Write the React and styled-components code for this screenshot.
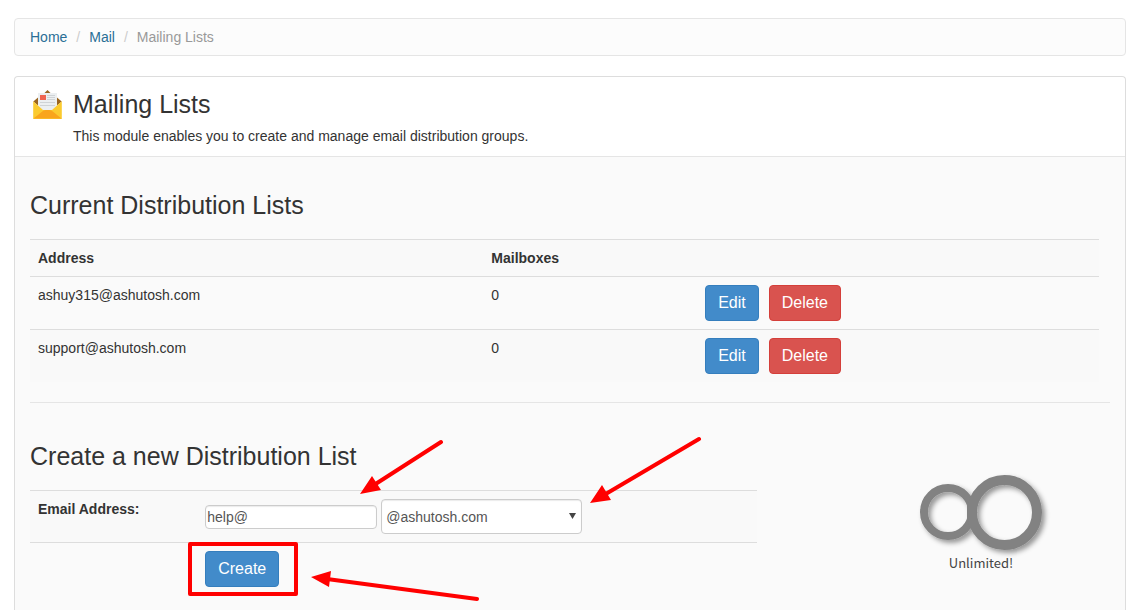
import React from 'react';
import styled, { createGlobalStyle } from 'styled-components';

const GlobalStyle = createGlobalStyle`
  *, *::before, *::after {
    box-sizing: border-box;
  }
  body {
    margin: 0;
    background: #fff;
    color: #333;
    font-family: 'Liberation Sans', Arial, sans-serif;
    font-size: 14px;
    line-height: 20px;
  }
`;

const Page = styled.div`
  display: flex;
  flex-direction: column;
  gap: 20px;
  min-height: 100vh;
  padding: 18px 8px 0 14px;
`;

const Breadcrumb = styled.ol`
  display: flex;
  margin: 0;
  padding: 8px 15px;
  list-style: none;
  background: #fcfcfc;
  border: 1px solid #e5e5e5;
  border-radius: 4px;
`;

const Crumb = styled.li`
  color: #999;
  & + &::before {
    content: '/';
    padding: 0 9px;
    color: #ccc;
  }
`;

const CrumbLink = styled.a`
  color: #2a6f96;
  text-decoration: none;
`;

const Panel = styled.main`
  flex: 1;
  background: #fafafa;
  border: 1px solid #ddd;
  border-bottom: 0;
  border-radius: 4px 4px 0 0;
`;

const PanelHeader = styled.header`
  display: flex;
  gap: 8px;
  padding: 10px 15px;
  background: #fff;
  border-bottom: 1px solid #e5e5e5;
  border-radius: 4px 4px 0 0;
`;

const Title = styled.h1`
  margin: 0 0 5px;
  font-size: 25px;
  font-weight: 400;
  line-height: 34px;
`;

const Desc = styled.p`
  margin: 0;
`;

const PanelBody = styled.div`
  padding: 15px 15px 0;
`;

const Section = styled.section`
  position: relative;
  padding-top: ${({ $top }) => $top}px;
`;

const SectionTitle = styled.h2`
  margin: 0 0 20px;
  font-size: 25px;
  font-weight: 400;
  line-height: 27px;
`;

const Divider = styled.hr`
  height: 1px;
  margin: 20px 0 0;
  border: 0;
  background: #e5e5e5;
`;

const Table = styled.table`
  width: ${({ $width }) => $width || '100%'};
  table-layout: fixed;
  border-collapse: separate;
  border-spacing: 0;
  th,
  td {
    padding: 8px;
    border-top: 1px solid #ddd;
    text-align: left;
    vertical-align: top;
  }
  tr:nth-child(odd) > * {
    background: #f9f9f9;
  }
`;

const Col = styled.col`
  width: ${({ $width }) => $width};
`;

const Actions = styled.div`
  display: flex;
  gap: 10px;
`;

const Button = styled.button`
  display: block;
  padding: 6px 12px;
  font-family: inherit;
  font-size: 16px;
  line-height: 22px;
  color: #fff;
  background: ${({ $danger }) => ($danger ? '#d9534f' : '#428bca')};
  border: 1px solid ${({ $danger }) => ($danger ? '#d43f3a' : '#357ebd')};
  border-radius: 4px;
  cursor: pointer;
`;

const CreateGrid = styled.div`
  display: grid;
  grid-template-columns: minmax(0, 1fr) 258px;
  gap: 95px;
`;

const Fields = styled.div`
  display: flex;
  align-items: center;
  gap: 4px;
`;

const TextInput = styled.input`
  width: 172px;
  height: 24px;
  padding: 1px;
  font-family: inherit;
  font-size: 14px;
  color: #555;
  background: #fff;
  border: 1px solid #ccc;
  border-radius: 4px;
  box-shadow: inset 0 1px 1px rgba(0, 0, 0, 0.08);
`;

const SelectWrap = styled.div`
  position: relative;
`;

const Select = styled.select`
  display: block;
  width: 201px;
  height: 35px;
  padding: 0 4px;
  appearance: none;
  font-family: inherit;
  font-size: 14px;
  color: #555;
  background: #fff;
  border: 1px solid #ccc;
  border-radius: 4px;
  box-shadow: inset 0 1px 1px rgba(0, 0, 0, 0.08);
`;

const Caret = styled.svg`
  position: absolute;
  top: 14px;
  right: 6px;
  pointer-events: none;
`;

const Quota = styled.figure`
  display: flex;
  flex-direction: column;
  align-items: center;
  margin: 32px 0 0;
  svg {
    overflow: visible;
  }
`;

const QuotaLabel = styled.figcaption`
  margin-top: 3px;
  font-family: 'Noto Sans CJK SC', 'Noto Sans', sans-serif;
  font-size: 13px;
  line-height: 20px;
  color: #444;
`;

const Annotations = styled.svg`
  position: absolute;
  top: 0;
  left: 0;
  pointer-events: none;
`;

const lists = [
  { address: 'ashuy315@ashutosh.com', mailboxes: 0 },
  { address: 'support@ashutosh.com', mailboxes: 0 },
];

const MailIcon = () => (
  <svg width="35" height="35" viewBox="0 0 35 35" aria-hidden="true">
    <path d="M14.5 6 17.5 3l3 3z" fill="#9b6520" />
    <path d="M3.3 14.5 8 10.5v8zM31.7 14.5 27 10.5v8z" fill="#9b6520" />
    <path d="M8 6h19v17.5H8z" fill="#eceff1" />
    <path d="M10 8h6v5h-6z" fill="#ef6451" />
    <path d="M17 8.5h8M17 10.5h8M17 12.5h8M10 15.5h15M10 18.5h15" stroke="#cfd3d6" />
    <path d="M3.2 14.2 13 23h9l9.8-8.8V32H3.2z" fill="#fbcb2f" />
    <path d="M3.5 31.5 13.5 23.5 16 23h3l2.5.5 10 8z" fill="#f9a51c" />
  </svg>
);

const UnlimitedIcon = () => (
  <svg width="122" height="75" viewBox="0 0 122 75" fill="none" aria-hidden="true">
    <defs>
      <filter id="ringShadow" x="-20%" y="-20%" width="150%" height="150%">
        <feDropShadow dx="3" dy="3" stdDeviation="2.5" floodColor="#000" floodOpacity="0.4" />
      </filter>
    </defs>
    <g filter="url(#ringShadow)" stroke="#828282">
      <circle cx="28" cy="37" r="24" strokeWidth="8" />
      <circle cx="84.5" cy="37.5" r="32.5" strokeWidth="10" />
      <path d="M49 28v18" strokeWidth="4" />
    </g>
  </svg>
);

const Pointers = () => (
  <Annotations width="1080" height="207" viewBox="30 403 1080 207" aria-hidden="true">
    <g stroke="#f00" strokeWidth="4" strokeLinecap="round" fill="none">
      <path d="M441 442 374 485M699 439 604 495M477 599 327 579" />
      <rect x="190" y="544" width="106" height="50" strokeLinejoin="round" />
    </g>
    <path d="M360 494 372 476 381 490zM590 503 602 485 611 500zM311 577 331 571 329 587z" fill="#f00" />
  </Annotations>
);

const App = () => {
  return (
    <>
      <GlobalStyle />
      <Page>
        <nav aria-label="Breadcrumb">
          <Breadcrumb>
            <Crumb>
              <CrumbLink href="#home">Home</CrumbLink>
            </Crumb>
            <Crumb>
              <CrumbLink href="#mail">Mail</CrumbLink>
            </Crumb>
            <Crumb>Mailing Lists</Crumb>
          </Breadcrumb>
        </nav>
        <Panel>
          <PanelHeader>
            <MailIcon />
            <div>
              <Title>Mailing Lists</Title>
              <Desc>This module enables you to create and manage email distribution groups.</Desc>
            </div>
          </PanelHeader>
          <PanelBody>
            <Section $top={20}>
              <SectionTitle>Current Distribution Lists</SectionTitle>
              <Table $width="99%">
                <colgroup>
                  <Col $width="42.4%" />
                  <Col $width="20%" />
                  <Col />
                </colgroup>
                <tbody>
                  <tr>
                    <th scope="col">Address</th>
                    <th scope="col">Mailboxes</th>
                    <td />
                  </tr>
                  {lists.map((list) => (
                    <tr key={list.address}>
                      <td>{list.address}</td>
                      <td>{list.mailboxes}</td>
                      <td>
                        <Actions>
                          <Button type="button">Edit</Button>
                          <Button type="button" $danger>Delete</Button>
                        </Actions>
                      </td>
                    </tr>
                  ))}
                </tbody>
              </Table>
            </Section>
            <Divider />
            <Section $top={40}>
              <CreateGrid>
                <form onSubmit={(e) => e.preventDefault()}>
                  <SectionTitle>Create a new Distribution List</SectionTitle>
                  <Table>
                    <colgroup>
                      <Col $width="23%" />
                      <Col />
                    </colgroup>
                    <tbody>
                      <tr>
                        <th scope="row">
                          <label htmlFor="address">Email Address:</label>
                        </th>
                        <td>
                          <Fields>
                            <TextInput id="address" type="text" defaultValue="help@" />
                            <SelectWrap>
                              <Select aria-label="Domain" defaultValue="@ashutosh.com">
                                <option>@ashutosh.com</option>
                              </Select>
                              <Caret width="7" height="6" viewBox="0 0 7 6" aria-hidden="true">
                                <path d="M0 0h7L3.5 6z" fill="#444" />
                              </Caret>
                            </SelectWrap>
                          </Fields>
                        </td>
                      </tr>
                      <tr>
                        <td />
                        <td>
                          <Button type="submit">Create</Button>
                        </td>
                      </tr>
                    </tbody>
                  </Table>
                </form>
                <Quota>
                  <UnlimitedIcon />
                  <QuotaLabel>Unlimited!</QuotaLabel>
                </Quota>
              </CreateGrid>
              <Pointers />
            </Section>
          </PanelBody>
        </Panel>
      </Page>
    </>
  );
};

export default App;
